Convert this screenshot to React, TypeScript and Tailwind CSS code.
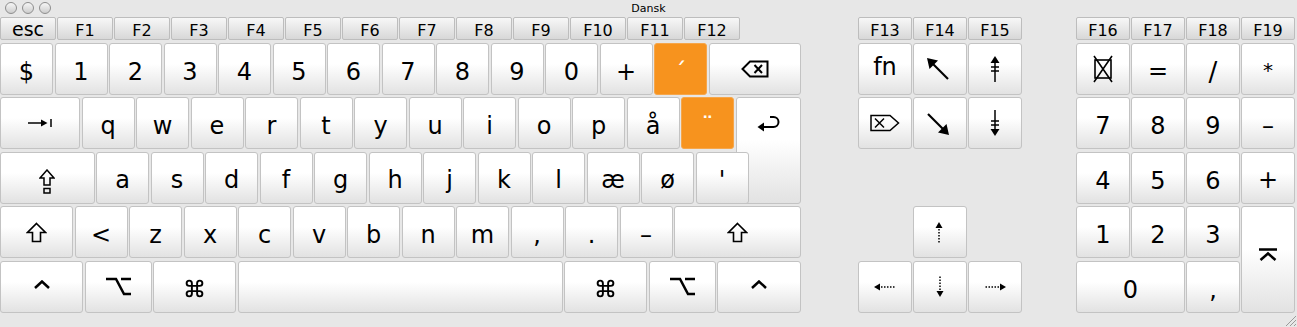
import React from 'react';
import { Command } from 'lucide-react';

type KeyProps = { className?: string; children?: React.ReactNode; orange?: boolean };

const Key = ({ className = '', children, orange }: KeyProps) => (
  <div
    className={`flex items-center justify-center border rounded-[3px] leading-none ${
      orange
        ? 'bg-[#f7931e] border-[#f6a64a] text-white'
        : 'border-[#c3c3c3] bg-linear-to-b from-white from-40% to-[#e2e2e2] text-black'
    } ${className}`}
  >
    {children}
  </div>
);

const FKey = ({ className = '', children }: KeyProps) => (
  <div
    className={`flex items-end justify-center border border-[#bdbdbd] rounded-[2px] bg-linear-to-b from-[#f7f7f7] to-[#d8d8d8] text-[16px] leading-none text-black ${className}`}
  >
    {children}
  </div>
);

// --- glyphs ---
const Backspace = () => (
  <svg width="28" height="18" viewBox="0 0 28 18" fill="none" stroke="black" strokeWidth="2">
    <path d="M9 1.5H26.5V16.5H9L1.5 9Z" />
    <path d="M13.5 5L21 13M21 5L13.5 13" />
  </svg>
);

const Tab = () => (
  <svg width="25" height="8" viewBox="0 0 25 8">
    <path d="M0 4H15" stroke="black" strokeWidth="1.5" />
    <path d="M13 0.5L19.5 4L13 7.5Z" fill="black" />
    <path d="M23 0V8" stroke="black" strokeWidth="1.5" />
  </svg>
);

const Caps = () => (
  <svg width="16" height="26" viewBox="0 0 16 26" fill="none" stroke="black" strokeWidth="1.5">
    <path d="M8 1L15 9H11V16H5V9H1Z" />
    <rect x="5" y="19.5" width="6" height="4.5" />
  </svg>
);

const Shift = () => (
  <svg width="21" height="21" viewBox="0 0 21 21" fill="none" stroke="black" strokeWidth="1.6">
    <path d="M10.5 1.5L19.5 10.5H14.5V19.5H6.5V10.5H1.5Z" />
  </svg>
);

const Return = () => (
  <svg width="23" height="17" viewBox="0 0 23 17" fill="none">
    <path d="M13 2H16.5A5 5 0 0 1 16.5 12H5" stroke="black" strokeWidth="2" />
    <path d="M0.5 12L7 7.5V16.5Z" fill="black" />
  </svg>
);

const Ctrl = () => (
  <svg width="16" height="9" viewBox="0 0 16 9" fill="none" stroke="black" strokeWidth="2.5">
    <path d="M1 8L8 1.5L15 8" />
  </svg>
);

const Option = () => (
  <svg width="25" height="19" viewBox="0 0 25 19" fill="none" stroke="black" strokeWidth="2.5">
    <path d="M0 2H10L18 17H25M15 2H25" />
  </svg>
);

const Cmd = () => <Command size={21} strokeWidth={2.2} color="black" />;

const DiagArrow = ({ className = '' }: { className?: string }) => (
  <svg width="23" height="23" viewBox="0 0 23 23" className={className}>
    <path d="M22 22L6 6" stroke="black" strokeWidth="2.2" />
    <path d="M1 1L12 3.5L3.5 12Z" fill="black" />
  </svg>
);

const PageArrow = ({ className = '' }: { className?: string }) => (
  <svg width="10" height="26" viewBox="0 0 10 26" className={className}>
    <path d="M5 6V26" stroke="black" strokeWidth="1.5" />
    <path d="M5 0L9.5 7H0.5Z" fill="black" />
    <path d="M1 11H9M1 15H9" stroke="black" strokeWidth="1.5" />
  </svg>
);

const FwdDelete = () => (
  <svg width="30" height="18" viewBox="0 0 30 18" fill="none" stroke="black" strokeWidth="1.5">
    <path d="M1 1.5H20L28.5 9L20 16.5H1Z" />
    <path d="M5 4.5L14 13.5M14 4.5L5 13.5" />
  </svg>
);

const Clear = () => (
  <svg width="24" height="28" viewBox="0 0 24 28" fill="none" stroke="black" strokeWidth="1.6">
    <rect x="4" y="5" width="16" height="18" />
    <path d="M3 1L21 27M21 1L3 27" />
  </svg>
);

const DotUp = ({ className = '' }: { className?: string }) => (
  <svg width="8" height="21" viewBox="0 0 8 21" className={className}>
    <path d="M4 0L7.5 6H0.5Z" fill="black" />
    <path d="M4 7V21" stroke="black" strokeWidth="1.5" strokeDasharray="1.5 1.5" />
  </svg>
);

const DotLeft = ({ className = '' }: { className?: string }) => (
  <svg width="22" height="8" viewBox="0 0 22 8" className={className}>
    <path d="M0 4L6 0.5V7.5Z" fill="black" />
    <path d="M7 4H22" stroke="black" strokeWidth="1.5" strokeDasharray="1.5 1.5" />
  </svg>
);

const Enter = () => (
  <svg width="18" height="13" viewBox="0 0 18 13" fill="none" stroke="black" strokeWidth="2.5">
    <path d="M0 1.5H18M1.5 12L9 5.5L16.5 12" />
  </svg>
);

const fKeys = ['F1', 'F2', 'F3', 'F4', 'F5', 'F6', 'F7', 'F8', 'F9', 'F10', 'F11', 'F12'];
const numRow = ['$', '1', '2', '3', '4', '5', '6', '7', '8', '9', '0', '+'];
const qRow = ['q', 'w', 'e', 'r', 't', 'y', 'u', 'i', 'o', 'p', 'å'];
const aRow = ['a', 's', 'd', 'f', 'g', 'h', 'j', 'k', 'l', 'æ', 'ø', "'"];
const zRow = ['<', 'z', 'x', 'c', 'v', 'b', 'n', 'm', ',', '.', '–'];

export default function App() {
  return (
    <div className="relative w-[1297px] h-[327px] overflow-hidden bg-[#e7e7e7] font-['DejaVu_Sans',sans-serif]">
      {/* Title bar */}
      <div className="grid grid-cols-3 items-center h-[16px]">
        <div className="flex gap-[5px] pl-[5px]">
          <div className="w-[12px] h-[12px] rounded-full border border-[#8e8e8e] bg-linear-to-b from-[#f6f6f6] to-[#cdcdcd]" />
          <div className="w-[12px] h-[12px] rounded-full border border-[#8e8e8e] bg-linear-to-b from-[#f6f6f6] to-[#cdcdcd]" />
          <div className="w-[12px] h-[12px] rounded-full border border-[#8e8e8e] bg-linear-to-b from-[#f6f6f6] to-[#cdcdcd]" />
        </div>
        <div className="text-center text-[11px] leading-none text-black">Dansk</div>
        <div />
      </div>

      <div className="flex mt-[1px]">
        {/* Main block */}
        <div className="flex flex-col w-[801px] gap-[2.5px]">
          <div className="flex h-[23px] gap-px">
            <FKey className="w-[56px] text-[19px]">esc</FKey>
            {fKeys.map((f) => (
              <FKey key={f} className="w-[56px]">
                {f}
              </FKey>
            ))}
          </div>

          <div className="flex h-[52px] gap-[1.5px]">
            {numRow.map((c) => (
              <Key key={c} className="w-[53px] pt-[6px] text-[24px]">
                {c}
              </Key>
            ))}
            <Key orange className="w-[53px] pt-[6px] text-[24px]">
              ´
            </Key>
            <Key className="flex-1">
              <Backspace />
            </Key>
          </div>

          <div className="grid grid-cols-[734px_13px_51px] grid-rows-[52px_52px] gap-x-[1.5px] gap-y-[2.5px]">
            <div className="col-start-1 row-start-1 flex gap-[1.5px]">
              <Key className="flex-1">
                <Tab />
              </Key>
              {qRow.map((c) => (
                <Key key={c} className="w-[53px] pt-[5px] text-[24px]">
                  {c}
                </Key>
              ))}
              <Key orange className="w-[53px] pt-[5px] text-[24px]">
                ¨
              </Key>
            </div>
            <Key className="col-start-2 col-span-2 row-start-1 row-span-2 !items-start pt-[17px]">
              <Return />
            </Key>
            <div className="z-10 col-start-1 col-span-2 row-start-2 flex gap-[1.5px]">
              <Key className="flex-1 pt-[9px]">
                <Caps />
              </Key>
              {aRow.map((c) => (
                <Key key={c} className="w-[53px] pt-[5px] text-[24px]">
                  {c}
                </Key>
              ))}
            </div>
          </div>

          <div className="flex h-[52px] gap-[1.5px]">
            <Key className="w-[73px]">
              <Shift />
            </Key>
            {zRow.map((c) => (
              <Key key={c} className="w-[53px] pt-[5px] text-[24px]">
                {c}
              </Key>
            ))}
            <Key className="flex-1">
              <Shift />
            </Key>
          </div>

          <div className="flex h-[52px] gap-[1.5px]">
            <Key className="w-[83px] pb-[5px]">
              <Ctrl />
            </Key>
            <Key className="w-[67px]">
              <Option />
            </Key>
            <Key className="w-[83px] pt-[4px]">
              <Cmd />
            </Key>
            <Key className="flex-1" />
            <Key className="w-[83px] pt-[4px]">
              <Cmd />
            </Key>
            <Key className="w-[67px]">
              <Option />
            </Key>
            <Key className="w-[84px] pb-[5px]">
              <Ctrl />
            </Key>
          </div>
        </div>

        {/* Navigation block */}
        <div className="ml-[57px] grid grid-cols-[repeat(3,54px)] grid-rows-[23px_repeat(5,52px)] gap-x-px gap-y-[2.5px]">
          <FKey className="col-start-1 row-start-1">F13</FKey>
          <FKey className="col-start-2 row-start-1">F14</FKey>
          <FKey className="col-start-3 row-start-1">F15</FKey>
          <Key className="col-start-1 row-start-2 pb-[4px] text-[24px]">fn</Key>
          <Key className="col-start-2 row-start-2 pr-[6px]">
            <DiagArrow />
          </Key>
          <Key className="col-start-3 row-start-2">
            <PageArrow />
          </Key>
          <Key className="col-start-1 row-start-3">
            <FwdDelete />
          </Key>
          <Key className="col-start-2 row-start-3 pr-[4px] pt-[2px]">
            <DiagArrow className="rotate-180" />
          </Key>
          <Key className="col-start-3 row-start-3">
            <PageArrow className="rotate-180" />
          </Key>
          <Key className="col-start-2 row-start-5 pr-[3px]">
            <DotUp />
          </Key>
          <Key className="col-start-1 row-start-6">
            <DotLeft />
          </Key>
          <Key className="col-start-2 row-start-6 pr-[1px]">
            <DotUp className="rotate-180" />
          </Key>
          <Key className="col-start-3 row-start-6">
            <DotLeft className="rotate-180" />
          </Key>
        </div>

        {/* Numeric keypad */}
        <div className="ml-[54px] grid grid-cols-[repeat(4,54px)] grid-rows-[23px_repeat(5,52px)] gap-x-px gap-y-[2.5px]">
          <FKey>F16</FKey>
          <FKey>F17</FKey>
          <FKey>F18</FKey>
          <FKey>F19</FKey>
          <Key>
            <Clear />
          </Key>
          <Key className="pt-[5px] text-[24px]">=</Key>
          <Key className="pt-[6px] text-[26px]">/</Key>
          <Key className="pt-[3px] text-[20px]">*</Key>
          <Key className="pt-[6px] text-[24px]">7</Key>
          <Key className="pt-[6px] text-[24px]">8</Key>
          <Key className="pt-[6px] text-[24px]">9</Key>
          <Key className="pt-[6px] text-[24px]">–</Key>
          <Key className="pt-[6px] text-[24px]">4</Key>
          <Key className="pt-[6px] text-[24px]">5</Key>
          <Key className="pt-[6px] text-[24px]">6</Key>
          <Key className="pt-[5px] text-[24px]">+</Key>
          <Key className="pt-[6px] text-[24px]">1</Key>
          <Key className="pt-[6px] text-[24px]">2</Key>
          <Key className="pt-[6px] text-[24px]">3</Key>
          <Key className="row-span-2 pb-[9px]">
            <Enter />
          </Key>
          <Key className="col-span-2 pt-[6px] text-[24px]">0</Key>
          <Key className="pt-[6px] text-[24px]">,</Key>
        </div>
      </div>

      {/* resize grip */}
      <svg width="14" height="14" viewBox="0 0 14 14" className="absolute right-0 bottom-0">
        <path d="M13 3L3 13M13 7L7 13M13 11L11 13" stroke="#9a9a9a" strokeWidth="1" />
      </svg>
    </div>
  );
}
